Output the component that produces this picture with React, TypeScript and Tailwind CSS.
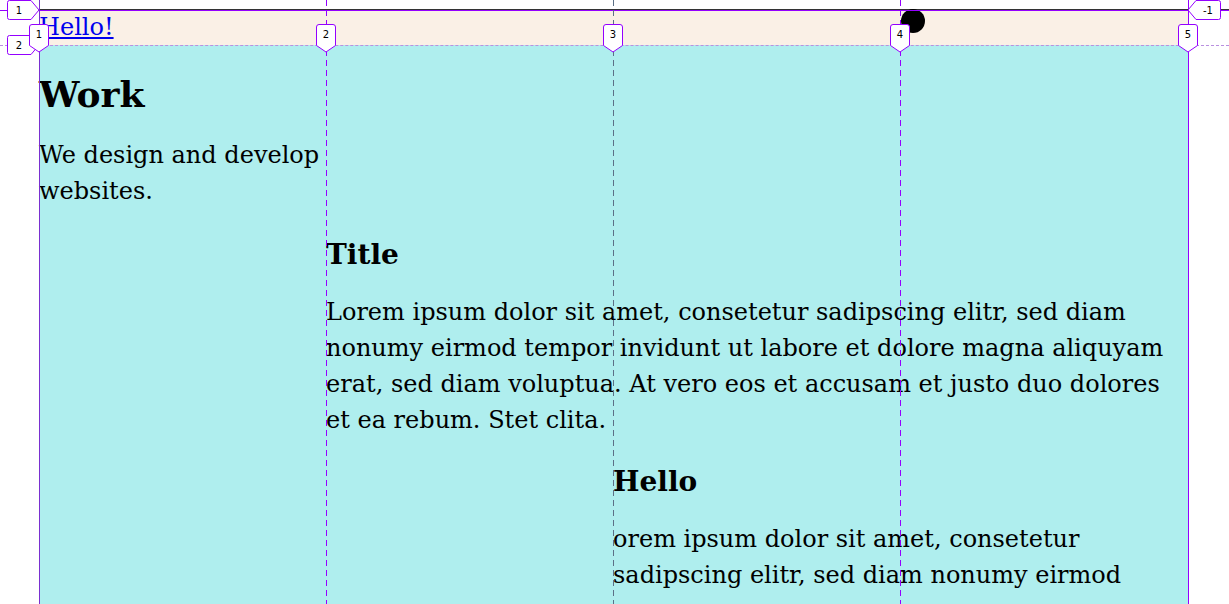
import React from "react";

const P = "#9400ff";

function ColLabel({ n }: { n: string }) {
  // tip points down at the column line, box 20 wide
  return (
    <svg className="absolute -left-[12px] top-[22px]" width={24} height={32}>
      <path
        d="M2.5 5 Q2.5 2.5 5 2.5 L19 2.5 Q21.5 2.5 21.5 5 L21.5 23.5 L12 30 L2.5 23.5 Z"
        fill="white"
        stroke={P}
        strokeWidth={1}
      />
      <text x={12} y={16} textAnchor="middle" fontSize={10} fontFamily="DejaVu Sans, sans-serif" fill="#000">
        {n}
      </text>
    </svg>
  );
}

function RowLabelLeft({ n }: { n: string }) {
  return (
    <svg className="absolute -left-[34px] -top-[12px]" width={36} height={22}>
      <path
        d="M4.5 1.5 L26 1.5 L34 11 L26 20.5 L4.5 20.5 Q2.5 20.5 2.5 18.5 L2.5 3.5 Q2.5 1.5 4.5 1.5 Z"
        fill="white"
        stroke={P}
        strokeWidth={1}
      />
      <text x={14} y={15} textAnchor="middle" fontSize={10} fontFamily="DejaVu Sans, sans-serif" fill="#000">
        {n}
      </text>
    </svg>
  );
}

function RowLabelRight({ n }: { n: string }) {
  return (
    <svg className="absolute -left-[2px] -top-[12px]" width={38} height={22}>
      <path
        d="M2 11 L10 1.5 L32.5 1.5 Q34.5 1.5 34.5 3.5 L34.5 18.5 Q34.5 20.5 32.5 20.5 L10 20.5 Z"
        fill="white"
        stroke={P}
        strokeWidth={1}
      />
      <text x={22} y={15} textAnchor="middle" fontSize={10} fontFamily="DejaVu Sans, sans-serif" fill="#000">
        {n}
      </text>
    </svg>
  );
}

export default function App() {
  return (
    <div className="relative w-[1229px] h-[604px] overflow-hidden bg-white font-['DejaVu_Serif',serif] text-black">
      {/* top dark line */}
      <div className="ml-[39px] mt-[9px] h-px bg-[#333]" />
      <div className="relative ml-[39px] w-[1149px]">
        {/* page grid */}
        <div className="min-h-[700px] grid grid-cols-[287px_287px_287px_288px] grid-rows-[35px_auto_auto_auto_1fr] bg-[#afeeee]">
          <header className="col-span-4 bg-[#faf0e6] relative">
            <a href="#" className="text-[#0000ee] underline text-[24px] leading-[34px] block">
              Hello!
            </a>
            <div className="absolute left-[862px] -top-[1px] w-[24px] h-[24px] rounded-full bg-black" />
          </header>
          <section className="col-start-1 row-start-2">
            <h1 className="text-[36px] leading-[42px] font-bold mt-[28px]">Work</h1>
            <p className="text-[24px] leading-[36px] mt-[22px]">We design and develop websites.</p>
          </section>
          <section className="col-start-2 col-span-3 row-start-3 pt-[29px]">
            <h2 className="text-[28px] leading-[34px] font-bold">Title</h2>
            <p className="text-[24px] leading-[36px] mt-[22px]">
              Lorem ipsum dolor sit amet, consetetur sadipscing elitr, sed diam nonumy eirmod tempor invidunt ut labore
              et dolore magna aliquyam erat, sed diam voluptua. At vero eos et accusam et justo duo dolores et ea rebum.
              Stet clita.
            </p>
          </section>
          <section className="col-start-3 col-span-2 row-start-4 pt-[27px]">
            <h3 className="text-[28px] leading-[34px] font-bold">Hello</h3>
            <p className="text-[24px] leading-[36px] mt-[22px]">
              orem ipsum dolor sit amet, consetetur sadipscing elitr, sed diam nonumy eirmod
            </p>
          </section>
        </div>

        {/* grid inspector overlay: row lines */}
        <div className="absolute -left-[39px] -right-[41px] top-0 border-t border-[#9400ff]">
          <div className="absolute left-[39px] top-0">
            <RowLabelLeft n="1" />
          </div>
          <div className="absolute left-[1188px] top-0">
            <RowLabelRight n="-1" />
          </div>
        </div>
        <div className="absolute -left-[39px] -right-[41px] top-[35px] border-t border-dashed border-[#b98fe0]">
          <div className="absolute left-[39px] top-0">
            <RowLabelLeft n="2" />
          </div>
        </div>

        {/* grid inspector overlay: column lines */}
        <div className="absolute inset-x-0 -top-[10px] h-[620px] grid grid-cols-[287px_287px_287px_288px] pointer-events-none">
          <div className="relative">
            <div className="absolute left-0 top-0 bottom-0 w-px bg-[#7a2fd0]" />
            <ColLabel n="1" />
          </div>
          <div className="relative">
            <div className="absolute left-0 top-0 bottom-0 w-px bg-[repeating-linear-gradient(to_bottom,#9400ff_0_6px,transparent_6px_10px)]" />
            <ColLabel n="2" />
          </div>
          <div className="relative">
            <div className="absolute left-0 top-0 bottom-0 w-px bg-[repeating-linear-gradient(to_bottom,#5b6f86_0_6px,transparent_6px_10px)]" />
            <ColLabel n="3" />
          </div>
          <div className="relative">
            <div className="absolute left-0 top-0 bottom-0 w-px bg-[repeating-linear-gradient(to_bottom,#9400ff_0_6px,transparent_6px_10px)]" />
            <ColLabel n="4" />
            <div className="absolute left-full top-0 bottom-0 w-px bg-[#9400ff]">
              <ColLabel n="5" />
            </div>
          </div>
        </div>
      </div>
    </div>
  );
}
